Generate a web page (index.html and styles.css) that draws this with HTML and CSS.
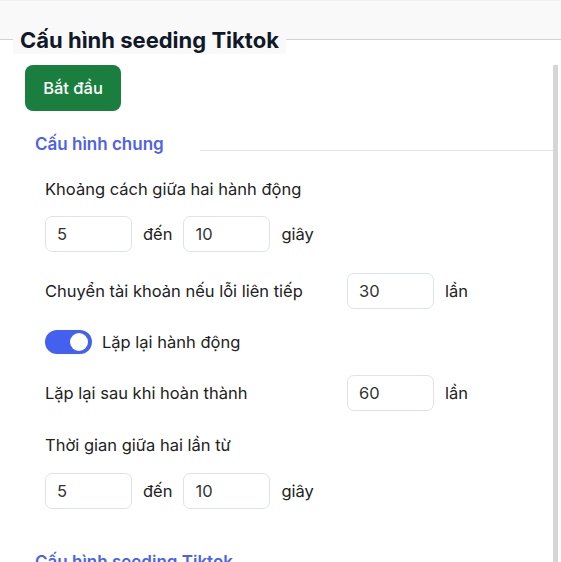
FILE: index.html
```html
<!DOCTYPE html>
<html lang="vi">
<head>
<meta charset="utf-8">
<title>Cấu hình seeding Tiktok</title>
<link rel="stylesheet" href="styles.css">
</head>
<body>
<div class="topbar"></div>
<fieldset class="panel">
  <legend class="panel-title">Cấu hình seeding Tiktok</legend>
  <div class="scroll-area">
    <div class="scroller">
      <button class="btn-start" type="button">Bắt đầu</button>
      <fieldset class="group">
        <legend class="group-title">Cấu hình chung</legend>
        <div class="group-body">
          <div class="label">Khoảng cách giữa hai hành động</div>
          <div class="row row-range">
            <input class="num" type="text" value="5">
            <span class="unit">đến</span>
            <input class="num" type="text" value="10">
            <span class="unit">giây</span>
          </div>
          <div class="row row-field">
            <span class="field-label">Chuyển tài khoản nếu lỗi liên tiếp</span>
            <input class="num" type="text" value="30">
            <span class="unit">lần</span>
          </div>
          <label class="row row-toggle">
            <span class="toggle"><span class="knob"></span></span>
            <span class="toggle-label">Lặp lại hành động</span>
          </label>
          <div class="row row-field">
            <span class="field-label">Lặp lại sau khi hoàn thành</span>
            <input class="num" type="text" value="60">
            <span class="unit">lần</span>
          </div>
          <div class="label label-after">Thời gian giữa hai lần từ</div>
          <div class="row row-range">
            <input class="num" type="text" value="5">
            <span class="unit">đến</span>
            <input class="num" type="text" value="10">
            <span class="unit">giây</span>
          </div>
        </div>
      </fieldset>
      <fieldset class="group group-next">
        <legend class="group-title">Cấu hình seeding Tiktok</legend>
        <div class="group-body">
          <div class="spacer"></div>
        </div>
      </fieldset>
    </div>
    <div class="scrollbar"><div class="thumb"></div></div>
  </div>
</fieldset>
</body>
</html>
```
FILE: styles.css
```css
html, body {
  margin: 0;
  padding: 0;
  height: 100%;
  overflow: hidden;
}
body {
  background: #f9f9f9;
  font-family: Inter, "Noto Sans", sans-serif;
  color: #222;
}
.topbar {
  height: 1px;
  background: #efefef;
  margin-bottom: 24px;
}
.panel {
  margin: 0;
  padding: 0;
  border: none;
  border-top: 1px solid #d2d2d2;
  background: #fff;
  min-width: 0;
}
.panel-title {
  margin-left: 13px;
  padding: 2px 7px 1px 7px;
  background: #f9f9f9;
  font-size: 22px;
  font-weight: 700;
  line-height: 26px;
  color: #111827;
}
.scroll-area {
  display: flex;
  height: 540px;
  margin-top: 11px;
}
.scroller {
  flex: 1;
  min-width: 0;
  padding-left: 25px;
  overflow: hidden;
}
.scrollbar {
  flex: none;
  width: 8px;
  display: flex;
}
.thumb {
  width: 5px;
  height: 520px;
  background: #d6d6d6;
}
.btn-start {
  display: block;
  width: 96px;
  height: 46px;
  border: none;
  border-radius: 8px;
  background: #1a7f3e;
  color: #fff;
  font-family: inherit;
  font-size: 16.5px;
  font-weight: 500;
  cursor: pointer;
}
.group {
  margin: 21px 0 0;
  padding: 0;
  border: none;
  border-top: 1px solid #e3e5ea;
  min-width: 0;
}
.group-next {
  margin-top: 41px;
}
.group-title {
  min-width: 165px;
  white-space: nowrap;
  padding: 0 0 12px 10px;
  font-size: 17px;
  font-weight: 600;
  line-height: 24px;
  color: #4c62ec;
}
.group-body {
  padding: 9px 0 0 20px;
  display: flex;
  flex-direction: column;
}
.label {
  font-size: 16.5px;
  line-height: 24px;
  margin-bottom: 15px;
}
.label-after {
  margin-top: 22px;
  margin-bottom: 16px;
}
.row {
  display: flex;
  align-items: center;
}
.row-field {
  margin-top: 21px;
}
.row-toggle {
  margin-top: 21px;
  height: 24px;
  cursor: pointer;
}
.num {
  box-sizing: border-box;
  width: 87px;
  height: 36px;
  padding: 0 11px;
  border: 1px solid #dde3ee;
  border-radius: 7px;
  background: #fff;
  font-family: inherit;
  font-size: 16.5px;
  color: #333;
  outline: none;
}
.unit {
  font-size: 16.5px;
  margin: 0 11px;
}
.field-label {
  font-size: 16.5px;
  width: 302px;
}
.toggle {
  position: relative;
  width: 47px;
  height: 24px;
  border-radius: 12px;
  background: #4361ee;
  flex: none;
}
.knob {
  position: absolute;
  right: 4px;
  top: 3px;
  width: 18px;
  height: 18px;
  border-radius: 50%;
  background: #fff;
}
.toggle-label {
  font-size: 16.5px;
  margin-left: 10px;
}
.spacer {
  height: 10px;
}
```
